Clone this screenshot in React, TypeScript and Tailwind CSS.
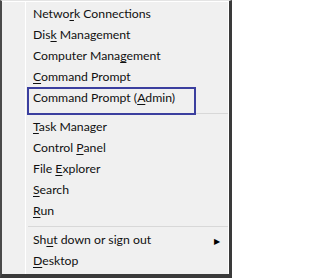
import React from "react";

type Item = { label: string; key: number; arrow?: boolean };

const groups: Item[][] = [
  [
    { label: "Network Connections", key: 5 },
    { label: "Disk Management", key: 3 },
    { label: "Computer Management", key: 13 },
    { label: "Command Prompt", key: 0 },
    { label: "Command Prompt (Admin)", key: 16 },
  ],
  [
    { label: "Task Manager", key: 0 },
    { label: "Control Panel", key: 8 },
    { label: "File Explorer", key: 5 },
    { label: "Search", key: 0 },
    { label: "Run", key: 0 },
  ],
  [
    { label: "Shut down or sign out", key: 2, arrow: true },
    { label: "Desktop", key: 0 },
  ],
];

const Label = ({ text, k }: { text: string; k: number }) => (
  <span>
    {text.slice(0, k)}
    <span className="underline underline-offset-2">{text[k]}</span>
    {text.slice(k + 1)}
  </span>
);

export default function App() {
  return (
    <div className="w-[232px] h-[278px] bg-white">
      <div
        className="relative w-[232px] h-[278px] flex bg-[#f0f0f0] border-l-2 border-r-[3px] border-b-[4px] border-t border-l-[#4a4a4a] border-r-[#3a3a3a] border-b-[#3a3a3a] border-t-[#e4e4e4] text-[#111] text-[12.25px]"
        style={{ fontFamily: "Lato, 'Noto Sans', sans-serif" }}
      >
        <div className="w-[23px] shrink-0 border-t border-white" />
        <div className="flex-1 border-l border-t border-r border-white pt-[2px]">
          {groups.map((g, gi) => (
            <div key={gi}>
              {gi > 0 && (
                <div className="h-[8px] flex items-center pl-[2px]">
                  <div className="h-px w-full bg-[#d8d8d8]" />
                </div>
              )}
              {g.map((it) => (
                <div
                  key={it.label}
                  className="h-[21px] flex items-center justify-between pl-[7px] pr-[8px] leading-none"
                >
                  <Label text={it.label} k={it.key} />
                  {it.arrow && <span className="text-[8px] text-black">▶</span>}
                </div>
              ))}
            </div>
          ))}
        </div>
        {/* highlight around the Admin entry */}
        <div className="absolute left-[25px] top-[86px] w-[169px] h-[28px] border-2 border-[#3b3f9f]" />
      </div>
    </div>
  );
}
